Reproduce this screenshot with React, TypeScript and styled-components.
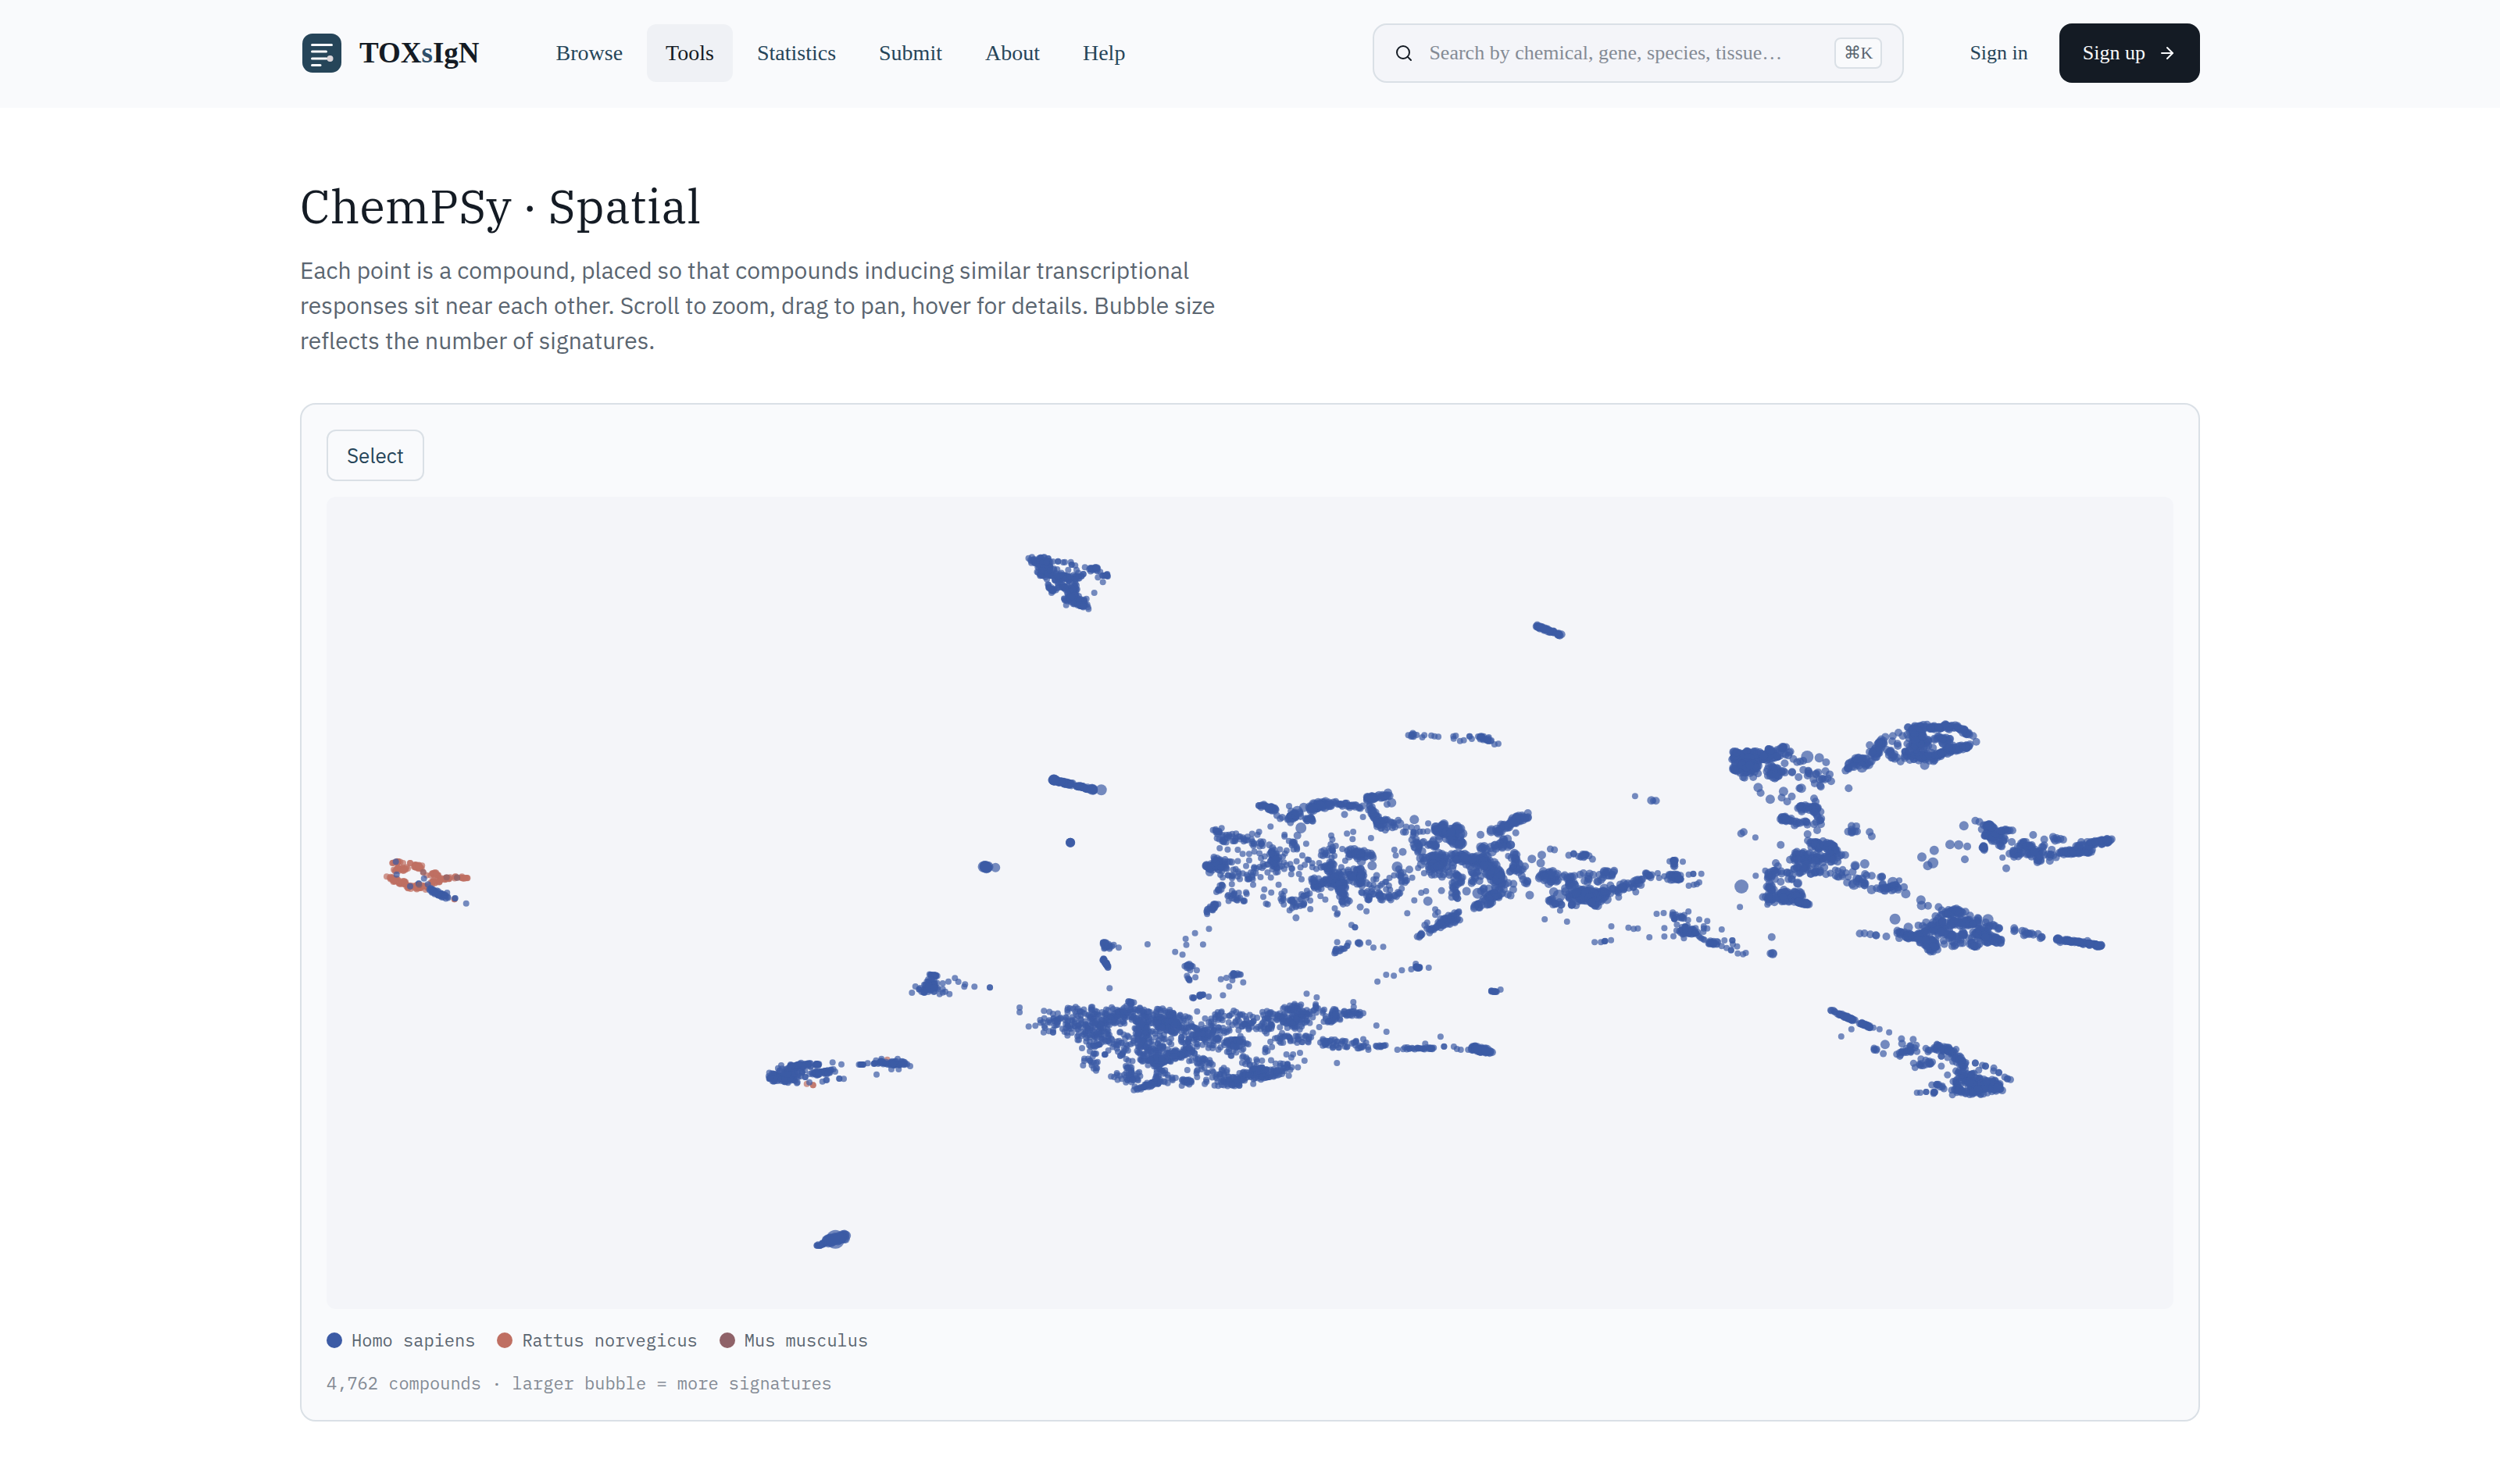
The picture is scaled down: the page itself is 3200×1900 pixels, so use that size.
import React from "react";
import styled, { createGlobalStyle } from "styled-components";
import { ArrowRight, Search } from "lucide-react";

const color = {
  ink: "#141b24",
  navy: "#264559",
  slate: "#5a6570",
  mute: "#848b95",
  line: "#dae0e6",
  surface: "#f9fafc",
  sunken: "#f4f5f9",
};

const font = {
  ui: '"Liberation Serif", "Times New Roman", serif',
  title: '"IBM Plex Serif", "Noto Serif", "DejaVu Serif", serif',
  body: '"IBM Plex Sans", "Liberation Sans", sans-serif',
  mono: '"IBM Plex Mono", "Liberation Mono", monospace',
};

const GlobalStyle = createGlobalStyle`
  *, *::before, *::after { box-sizing: border-box; }
  body { margin: 0; background: #fff; color: ${color.ink}; font-family: ${font.body}; }
`;

const Header = styled.header`
  background: ${color.surface};
`;

const Container = styled.div`
  max-width: 2560px;
  margin: 0 auto;
  padding: 0 64px;
`;

const Bar = styled(Container)`
  display: flex;
  align-items: center;
  min-height: 138px;
  padding-bottom: 2px;
  font-family: ${font.ui};
`;

const Brand = styled.a`
  display: flex;
  align-items: center;
  gap: 20px;
  margin-right: 74px;
  color: ${color.ink};
  font-size: 37px;
  font-weight: 700;
  line-height: 44px;
  text-decoration: none;
`;

const BrandAccent = styled.span`
  color: #2f4f6a;
`;

const Nav = styled.nav`
  display: flex;
  gap: 7px;
  margin-right: auto;
`;

const NavLink = styled.a<{ $active?: boolean }>`
  padding: 20px 24px;
  border-radius: 12px;
  background: ${(p) => (p.$active ? "#eff1f5" : "transparent")};
  color: ${(p) => (p.$active ? color.ink : color.navy)};
  font-size: 28px;
  line-height: 34px;
  text-decoration: none;
`;

const SearchBox = styled.label`
  display: flex;
  align-items: center;
  gap: 20px;
  flex: 0 1 680px;
  height: 76px;
  padding: 0 26px;
  border: 2px solid ${color.line};
  border-radius: 18px;
  background: ${color.sunken};
`;

const SearchInput = styled.input`
  flex: 1;
  min-width: 0;
  padding: 0;
  border: 0;
  outline: 0;
  background: transparent;
  color: ${color.ink};
  font: 26px ${font.ui};
  &::placeholder { color: ${color.mute}; opacity: 1; }
`;

const Kbd = styled.kbd`
  padding: 0 10px;
  border: 2px solid ${color.line};
  border-radius: 8px;
  background: ${color.surface};
  color: ${color.slate};
  font: 22px/36px ${font.ui};
`;

const Account = styled.div`
  display: flex;
  align-items: center;
  gap: 12px;
  margin-left: 56px;
  font-size: 26px;
  line-height: 32px;
`;

const SignIn = styled.a`
  padding: 22px 28px;
  color: ${color.navy};
  text-decoration: none;
`;

const SignUp = styled.button`
  display: flex;
  align-items: center;
  gap: 16px;
  padding: 22px 30px;
  border: 0;
  border-radius: 16px;
  background: ${color.ink};
  color: ${color.surface};
  font: inherit;
  cursor: pointer;
`;

const Page = styled(Container)`
  padding-top: 91px;
  padding-bottom: 80px;
`;

const Title = styled.h1`
  margin: 0 0 24px;
  font: 400 60px/70px ${font.title};
`;

const Lead = styled.p`
  max-width: 1200px;
  margin: 0 0 58px;
  color: ${color.slate};
  font-size: 30px;
  line-height: 45px;
`;

const Card = styled.section`
  display: flex;
  flex-direction: column;
  align-items: flex-start;
  padding: 32px;
  border: 2px solid ${color.line};
  border-radius: 20px;
  background: ${color.surface};
`;

const SelectButton = styled.button`
  padding: 16px 24px;
  border: 2px solid ${color.line};
  border-radius: 12px;
  background: ${color.surface};
  color: ${color.navy};
  font: 26px/30px ${font.body};
  cursor: pointer;
`;

const Plot = styled.svg`
  display: block;
  width: 100%;
  height: auto;
  margin: 20px 0 24px;
  border-radius: 12px;
  background: ${color.sunken};
`;

const Legend = styled.ul`
  display: flex;
  flex-wrap: wrap;
  gap: 28px;
  margin: 0 0 24px;
  padding: 0;
  list-style: none;
  color: ${color.slate};
  font: 22px/32px ${font.mono};
`;

const LegendItem = styled.li`
  display: flex;
  align-items: center;
  gap: 12px;
`;

const Swatch = styled.span<{ $color: string }>`
  width: 20px;
  height: 20px;
  border-radius: 50%;
  background: ${(p) => p.$color};
`;

const Caption = styled.p`
  margin: 0;
  color: ${color.mute};
  font: 22px/30px ${font.mono};
`;

/* ---------- embedding ---------- */

type Species = "human" | "rat" | "mouse";

const speciesColor: Record<Species, string> = {
  human: "#3c5ba5",
  rat: "#bf6f62",
  mouse: "#8f6268",
};

/**
 * A tile of the embedding. `runs` holds dense streaks, each one
 * "x1 y1 x2 y2 count spread radius"; `dots` holds single compounds,
 * each one "x y radius". Spread and radius may be left out.
 */
interface Tile {
  origin: [number, number];
  scale: [number, number];
  radius: number;
  species?: Species;
  runs: string;
  dots: string;
}

const tiles: Tile[] = [
  {
    origin: [842, 43],
    scale: [3, 3],
    radius: 4,
    runs: `182 113 252 118 38 3,210 135 255 140 30 4,210 165 265 168 34 3,235 140 260 165 20 4,265 180 340 185 50 4,355 170 370 190 8 3,
      400 152 440 148 20 2,455 173 475 172 12 1,245 213 270 235 18 2,285 210 320 215 16 3,320 220 360 220 25 4,315 255 380 278 44 4,330 230 345 270 20 4,
      360 285 395 290 18 2,260 958 330 975 50 1 5,330 975 425 997 35 1 5,264 957 270 960 3 0 7,0 1292 15 1293 8 1 7`,
    dots: `263 120,283 119,283 119,303 123,309 122,332 122,335 132,335 132,349 135,354 152,322 152,280 150,240 188,380 168,380 168,386 142,
      445 160,436 181,455 199,422 240,258 240,400 302,392 263,314 287,306 262,415 995 7,449 997 7,330 1199 6,330 1199 6,331 1199 6,330 1198 5,43 1295 6`,
  },
  {
    origin: [1548, 165],
    scale: [1, 1],
    radius: 5,
    runs: `0 0 8 4 12 1,4 2 32 12 26 1`,
    dots: ``,
  },
  {
    origin: [1082, 86],
    scale: [2.24, 3],
    radius: 4,
    runs: `678 658 695 658 8 2,885 668 915 676 22 2`,
    dots: `702 657,718 666,724 658,744 659,753 662,764 664,807 662,814 660,808 671,826 680,837 677,853 662,854 662,860 672,878 663,925 693,936 691`,
  },
  {
    origin: [1082, 86],
    scale: [2.24, 3],
    radius: 4.5,
    runs: `250 926 300 945 32 2,305 965 370 965 36 4,380 980 410 978 12 2,395 935 460 920 30 3 6,460 918 540 932 30 2,562 903 620 885 30 2 5.5,
      570 935 595 995 34 3,590 1000 640 1000 25 5,118 1023 140 1023 12 2 4,130 1040 150 1055 10 3 4,150 1055 240 1048 30 4 4,235 1070 262 1075 12 3 4,
      340 1070 355 1090 12 3 4,285 1085 298 1160 34 3,105 1165 145 1155 42 4 5.5,120 1140 165 1142 12 3,145 1185 230 1192 30 5 4,200 1140 330 1130 22 8 4,
      230 1170 360 1180 26 9 4,145 1220 130 1270 10 2 4,98 1345 130 1300 22 2 4,160 1280 205 1275 22 5 4,300 1270 330 1300 8 4 4,340 1315 390 1275 30 5 4,
      400 1130 475 1130 22 10 4,460 1075 468 1110 9 3 4,510 1110 575 1120 32 4 5,435 1150 455 1170 18 5,405 1210 412 1245 15 2,410 1230 550 1195 70 6,
      470 1190 490 1250 26 4,520 1170 545 1220 32 5 5,480 1250 500 1305 22 4,550 1250 560 1300 10 3,560 1220 625 1230 14 6 4,560 1250 600 1280 9 3,
      600 1285 655 1270 18 3,655 1180 665 1220 12 3,765 1020 825 1030 42 5 6,785 1040 830 1070 26 4 5.5,700 1075 770 1075 18 5 5,700 1080 705 1120 10 3,
      725 1130 790 1140 48 7 5.5,745 1170 770 1180 18 5 5,810 1120 840 1130 26 4 5,840 1135 900 1140 32 5 5.5,900 1130 935 1220 56 5 6,870 1170 870 1220 12 5 5,
      800 1190 830 1220 16 5 5,805 1230 815 1305 18 3,890 1270 950 1260 36 5 5,870 1318 920 1295 20 3 5,915 1020 940 1025 7 2 6,945 1015 1015 965 56 3 5,
      925 1080 965 1075 18 4 5.5,890 1100 910 1090 7 5 6,975 1130 1060 1140 11 5 5.5,960 1180 1010 1170 18 6 5,1005 1200 1020 1230 6 2 5,960 1250 985 1250 7 6 5,
      1170 1117 1190 1122 14 2,705 1435 715 1420 8 1,735 1400 825 1352 58 4,1060 1205 1100 1200 28 6 5.5,1130 1195 1145 1220 12 3 5,1160 1200 1230 1200 16 5 5,
      1240 1192 1270 1185 12 3 5,1130 1250 1180 1270 22 7 5.5,1165 1270 1240 1270 66 5 6,1200 1300 1220 1305 12 2 5.5,1240 1260 1340 1225 38 4 5,1070 1300 1110 1300 12 3 5,
      1150 1300 1155 1300 5 3 5,1355 1190 1375 1200 12 2,680 1020 740 1030 5 3 4`,
    dots: `336 930 4,340 994,370 1014 7,378 935 6,360 950 7,283 1009 4,495 962,548 972 4,617 923,630 917 6,640 1010,670 1030,695 982 6,735 997 4,693 1030 4,711 1028 4,
      720 1028 4,733 1027 4,691 1044 4,672 1011,653 998 6,664 1030,520 1029 4,502 1036 4,518 1057 4,571 1053 4,457 1043 4,460 1058 4,250 1029 4,323 1047 4,323 1040 4,
      360 1043 5,137 1092 4,160 1097 4,189 1098 4,203 1114 4,385 1075 4,329 1101 4,374 1120 4,381 1156 4,172 1230 4,233 1232 4,306 1232 4,265 1250 4,285 1262 4,262 1279 4,
      270 1305 4,275 1308 4,323 1257 4,397 1326 4,356 1359,436 1100,543 1142 6,574 1159 6,587 1197,637 1196 4,646 1164 7,638 1098 4,642 1120 4,662 1106 5,681 1174 5,
      663 1185,689 1205 4,659 1247 4,426 1276 4,440 1289 4,467 1323 4,475 1342 4,473 1346 4,558 1334 4,540 1318,675 1342 4,695 1292 4,715 1263 4,729 1257 4,734 1295 6,
      773 1255,706 1168 4,723 1188 4,845 1257 5.5,877 1265 7,885 1040 5,986 1033,964 1122 4,865 1175 8,1026 1272 5.5,1085 1095,1097 1098,1138 1119,1152 1113,1152 1114,1206 1134,
      823 1335 4,755 1327 4,763 1338 4,755 1348 4,732 1378 4,1281 1280,1330 1260,1095 1260 6,1110 1275 8,1113 1331 4,1069 1365 4,1133 1374 4,1393 1188 4,1397 1206 4,
      1412 1200 4,1240 1182 6`,
  },
  {
    origin: [1082, 86],
    scale: [2.24, 3],
    radius: 4,
    runs: `1425 1202 1457 1205 30 3 4.5,1440 1135 1440 1170 12 1 4.5,1435 1355 1470 1358 18 2,1450 1405 1500 1410 40 4,1500 1415 1525 1442 10 1,465 1490 505 1465 14 2`,
    dots: `1482 1193,1495 1190,1495 1191,1518 1190,1482 1236,1496 1232,1512 1223,1505 1230,1427 1142,1465 1144,1328 892,1375 908 5.5,1380 910,1388 910 5,
      1390 1344,1410 1341,1436 1339,1481 1335,1480 1368,1512 1366,1535 1372,1525 1392,1535 1400,1525 1400,1448 1385,1412 1399,1412 1431,1369 1434,1438 1430,1468 1438,
      1524 1413,1260 1392,1309 1397,1324 1402,1336 1400,1212 1453,1230 1453,1242 1448,1240 1450,1242 1449,1259 1445,515 1387,525 1396,525 1396,474 1453,506 1456,
      536 1456 5,538 1458 5,533 1455,564 1454,578 1474,606 1471`,
  },
  {
    origin: [842, 543],
    scale: [2.24, 3],
    radius: 4,
    runs: `338 92 358 100 22 3,340 145 355 178 28 1,578 172 595 175 12 2,580 208 588 228 5 1,710 208 732 205 14 2,595 293 600 300 4 1,610 288 630 286 10 1,
      1235 178 1250 182 14 1,1452 270 1466 272 12 1,185 365 215 360 8 5,165 400 240 385 24 6,240 370 330 400 66 10,240 430 310 440 24 6,330 380 400 370 60 6,
      310 350 400 350 16 4,310 410 360 470 52 8,415 315 430 315 10 2,395 340 440 355 16 4,440 365 540 380 100 8,440 390 460 440 42 6,500 400 560 410 66 6,
      430 440 520 450 32 10,435 470 540 480 38 7,370 430 420 500 26 10,450 500 490 540 42 8,485 542 595 495 100 4,550 390 620 430 32 8,600 430 660 440 44 5,
      570 430 580 480 16 4,620 440 740 470 46 12,650 380 740 400 46 9,700 465 745 475 32 4,740 380 800 400 24 8,790 360 830 350 14 5,790 400 820 400 18 4,
      860 335 900 330 20 3,850 380 910 390 70 7,890 350 970 350 36 6,985 380 1010 370 28 4,1000 350 1080 358 34 3,860 430 880 450 6 2,840 455 940 455 28 3,
      965 470 1090 472 52 4,1120 480 1150 482 10 1,1200 490 1290 490 30 1,1400 488 1455 504 56 2 5,300 500 330 495 12 6,290 540 320 560 12 4,
      395 610 450 590 30 5,430 645 500 620 44 2,405 530 415 575 10 3,490 570 515 610 24 6,525 600 545 610 5 2,570 610 590 620 16 2,600 530 650 560 20 6,
      620 560 690 610 34 9,670 620 740 622 32 3,720 600 850 580 100 4,760 560 800 575 28 4,740 530 800 545 9 4,840 550 890 565 16 5,680 500 830 490 16 10,270 345 320 345 8 3`,
    dots: `16 256,101 333,101 351,127 406,359 259,371 92,385 103,468 90,644 31,604 47,577 69,579 92,627 91,547 119,568 130,590 190,609 190,605 217,678 224,694 219,
      711 228,742 236,702 252,684 286,643 291,1127 233,1152 207,1174 211,1197 190,1224 186,1237 165,1274 180,1480 264,171 346,170 428,197 428,197 428,
      950 320,950 326,924 280,953 294,1058 312,1059 331,960 408,942 430,1124 402,1153 426,1308 445,715 345,722 350,610 348,1100 485,1101 495,1184 495,1264 472,
      1318 482,1318 483,1346 483,1355 492,1366 495,1387 495,280 489,345 513,345 514,347 513,390 518,390 518,283 555,323 566,320 565,380 585,380 592,372 600,363 598,
      566 633,582 573,610 600,873 595,866 513,885 513,880 525,905 507,918 537,1011 546,632 626,660 632,771 626,793 610,812 500,511 337`,
  },
  {
    origin: [1732, 53],
    scale: [2.529, 3],
    radius: 5,
    runs: `172 840 270 842 90 5 5,185 882 255 880 76 5 5,285 830 350 820 50 5 5,280 895 320 910 30 6 5,415 900 480 925 16 5,390 1038 450 1035 32 3,445 1050 455 1095 11 3,
      328 1075 362 1085 26 2,370 1095 430 1100 12 3,545 1117 575 1120 9 3,428 1175 500 1190 52 3,475 1170 510 1220 30 4,370 1228 500 1230 66 5,380 1265 465 1270 32 5,
      285 1295 365 1295 24 4,285 1330 300 1350 13 2,282 1385 395 1380 56 4,330 1370 390 1365 22 3,380 1400 420 1405 24 1,485 1275 545 1295 12 4 4.5,555 1325 600 1320 14 4,
      655 1342 705 1345 24 3,530 905 550 880 5 1,550 865 610 855 26 4 5.5,610 840 635 840 8 4,632 828 658 770 36 3,665 810 700 845 14 3,728 835 830 840 54 4,
      830 835 945 792 54 2,740 795 800 775 40 6,750 735 800 730 28 4,750 740 780 780 24 5,800 728 900 725 40 2,900 725 935 755 20 2,845 765 885 805 28 5,
      990 1105 1008 1105 20 2,995 1120 1040 1165 56 5,982 1182 985 1200 11 1,1040 1122 1075 1122 9 1,1100 1180 1135 1180 17 3,1075 1210 1100 1215 18 3,
      1130 1200 1170 1230 38 5,1180 1190 1210 1230 11 4,1205 1150 1240 1160 7 2,1230 1208 1330 1200 60 2,1280 1185 1310 1180 8 1,1322 1175 1398 1160 52 2,
      700 1500 715 1530 8 3,725 1523 780 1535 32 3,780 1490 850 1500 30 5,785 1530 830 1578 66 5,840 1470 855 1490 13 3,850 1435 910 1435 38 3,880 1480 970 1472 54 3,
      850 1520 905 1565 32 6,915 1520 920 1530 8 2,940 1525 1035 1550 50 4,935 1555 965 1565 14 2,970 1510 1000 1530 26 3,985 1485 1045 1492 12 3,
      1110 1515 1135 1520 8 2,1218 1540 1255 1545 14 1,1255 1545 1372 1568 62 1`,
    dots: `205 918,210 920,238 918,340 865,330 895,336 895,364 898,364 900,368 848,380 860,385 918,400 855,390 858,413 840 8,452 844 6,474 861,472 895,400 890,437 942,
      457 955,455 950,254 958 6,262 979,293 1003 6,336 973 6,330 997,348 1012,363 992,388 961,394 961 6,547 961,435 1000,440 1012,388 1033,395 1050,445 1122,414 1137,
      415 1162,207 1129,199 1135,245 1150 4,327 1178,615 1129,622 1145,536 1217,311 1248,318 1260,277 1277 4,246 1297 4,382 1325 6,382 1327,200 1338 9,284 1408 4,
      195 1417 4,327 1320,337 1350,568 1258 6,568 1260,560 1282,599 1251 6,564 1330 7,600 1290,605 1295,622 1297,650 1302,655 1300,655 1302,711 1315 4,621 1350 6,638 1345,
      690 1322 7,726 1340,732 1366 6,781 1390 6,783 1411 6,804 1412,838 1417,590 880 7,615 795,690 760,708 747,722 760,688 780,705 790,706 798,715 858,745 852,793 872 6,
      950 760,960 782,824 770,825 775,805 798,790 805,820 805,860 715,920 1105 6,957 1085,970 1090,978 1118,1075 1167,875 1177 6,903 1178 6,931 1184,923 1234,
      824 1199 6,784 1225 6,820 1247 7,803 1258 6,1045 1227 4,1057 1268,1144 1140,1180 1157,1180 1180,1300 1167,697 1463 7,583 1519,598 1518,617 1522,635 1525,636 1526,
      669 1530,740 1495 6,828 1452,925 1435,940 1450,998 1465 7,1083 1498,1083 1510,1085 1505,1145 1523,1160 1520,1172 1532,1172 1532,1168 1537,1232 1552,1320 1547,
      298 1532,294 1595,301 1596 6,302 1595`,
  },
  {
    origin: [1732, 53],
    scale: [2.529, 3],
    radius: 4.5,
    runs: `490 1810 500 1820 5 1,510 1825 565 1852 42 1,580 1860 620 1880 26 1,625 1962 645 1965 5 1,705 1978 750 1960 22 3,775 2022 815 2010 15 3,818 1952 888 1972 42 3,
      895 1995 930 2030 26 3,893 2080 900 2130 18 3,905 2045 955 2090 54 6,935 2100 1040 2105 90 5 5,905 2130 990 2125 36 3,830 2098 860 2112 9 1,818 2128 826 2130 5 1,
      85 1555 125 1555 20 2 4,795 1970 805 1960 4 2`,
    dots: `627 1880 4,647 1886 4,678 1898 4,556 1886 4,523 1914 4,718 1923,756 1925,720 1942 5,766 1948,665 1945 6,659 1980,768 1972,781 2000,757 2017,762 2033,847 1990,
      847 1990,847 2028,867 2062,867 1995,884 2010,883 2138,880 2120,957 2016,957 2016,980 2025,990 2028,990 2028,1017 2035,1016 2046,1033 2053,1033 2053,968 2044,
      1052 2070,1062 2076,1060 2077,1071 2080,768 2130 4,779 2130 4,798 2127 4,798 2127 4,816 2100,145 1545 4,170 1545 4,171 1545 4,172 1560 4,186 1568 4,136 1567 4,
      136 1503 4,152 1574 4,166 1583 4,167 1582 4,188 1595 4,205 1598 4,214 1593 4`,
  },
  {
    origin: [542, 563],
    scale: [3, 3],
    radius: 4,
    species: "rat",
    runs: ``,
    dots: `242 571,242 571,218 566,527 473`,
  },
  {
    origin: [542, 563],
    scale: [3, 3],
    radius: 4,
    runs: `690 148 720 150 16 1,680 172 715 172 9 2,660 203 725 195 54 4,76 540 175 545 100 4,120 518 205 520 36 4,150 497 235 492 46 2,250 490 265 492 14 1,
      235 528 320 518 42 2,418 492 435 492 7 0,475 483 600 488 60 2,258 1187 310 1170 30 1,300 1170 365 1152 46 2 6`,
    dots: `622 216,635 192,740 180,762 173,787 160,800 174,826 184,823 193,862 193,921 196,740 202,750 212,766 221,728 221,740 215,120 495,317 484,351 491,212 540,
      212 540,228 560,180 563,278 557,292 552,295 551,343 546,343 546,360 547,452 487,505 470,567 470,543 510,571 510,486 530,615 498,328 1163 12`,
  },
  {
    origin: [22, 423],
    scale: [3, 3],
    radius: 4,
    species: "rat",
    runs: `185 135 215 135 12 1,190 165 245 160 22 2,172 195 240 220 48 2,245 228 320 232 30 2,270 150 300 155 24 2,325 175 370 185 14 2,335 215 375 200 14 2,
      370 200 430 192 20 1,450 193 482 193 11 1`,
    dots: `228 138,255 138,255 138,305 173,318 185,425 277,425 277`,
  },
  {
    origin: [22, 423],
    scale: [3, 3],
    radius: 4,
    runs: `330 242 398 268 46 2`,
    dots: `200 133,203 182,308 197,288 216,288 218,255 227,323 220,397 252,427 274,428 273,470 293`,
  },
  {
    origin: [22, 423],
    scale: [3, 3],
    radius: 4,
    species: "mouse",
    runs: ``,
    dots: `395 193,435 193,436 195,290 222,305 173`,
  },
];

interface Point {
  x: number;
  y: number;
  r: number;
  species: Species;
}

function buildPoints(): Point[] {
  let seed = 4762;
  const random = () => {
    seed = (seed * 1664525 + 1013904223) % 4294967296;
    return seed / 4294967296;
  };
  const parse = (list: string) =>
    list
      .split(",")
      .map((entry) => entry.trim())
      .filter(Boolean)
      .map((entry) => entry.split(/\s+/).map(Number));
  const points: Point[] = [];
  for (const tile of tiles) {
    const species = tile.species ?? "human";
    const add = (x: number, y: number, r: number, spread = 0) => {
      const angle = random() * Math.PI * 2;
      const reach = Math.sqrt(random()) * spread * 1.6;
      points.push({
        x: tile.origin[0] + x / tile.scale[0] + Math.cos(angle) * reach,
        y: tile.origin[1] + y / tile.scale[1] + Math.sin(angle) * reach,
        r,
        species,
      });
    };
    for (const [x1, y1, x2, y2, count, spread = 0, r = tile.radius] of parse(tile.runs)) {
      for (let i = 0; i < count; i++) {
        const t = random();
        add(x1 + (x2 - x1) * t, y1 + (y2 - y1) * t, r, spread);
      }
    }
    for (const [x, y, r = tile.radius] of parse(tile.dots)) add(x, y, r);
  }
  return points;
}

const points = buildPoints();

function SpatialPlot() {
  return (
    <Plot viewBox="0 0 2364 1040" role="img" aria-label="Compound map">
      {points.map((p, i) => (
        <circle
          key={i}
          cx={p.x.toFixed(1)}
          cy={p.y.toFixed(1)}
          r={p.r}
          fill={speciesColor[p.species]}
          fillOpacity={0.7}
        />
      ))}
    </Plot>
  );
}

function Logo() {
  return (
    <svg width="56" height="56" viewBox="0 0 56 56" aria-hidden="true">
      <rect x="3" y="3" width="50" height="50" rx="13" fill={color.navy} />
      <g stroke={color.surface} strokeWidth="3" strokeLinecap="round">
        <path d="M15.5 17.5H40.5" />
        <path d="M15.5 26H33.5" />
        <path d="M15.5 35H34" />
        <path d="M15.5 43.5H26" />
      </g>
      <circle cx="38.5" cy="35" r="4" fill="#dcd6da" />
    </svg>
  );
}

const navItems = ["Browse", "Tools", "Statistics", "Submit", "About", "Help"];

const legend: { label: string; species: Species }[] = [
  { label: "Homo sapiens", species: "human" },
  { label: "Rattus norvegicus", species: "rat" },
  { label: "Mus musculus", species: "mouse" },
];

export default function App() {
  return (
    <>
      <GlobalStyle />
      <Header>
        <Bar>
          <Brand href="#">
            <Logo />
            <span>
              TOX<BrandAccent>s</BrandAccent>IgN
            </span>
          </Brand>
          <Nav aria-label="Main">
            {navItems.map((item) => (
              <NavLink key={item} href="#" $active={item === "Tools"}>
                {item}
              </NavLink>
            ))}
          </Nav>
          <SearchBox>
            <Search size={24} aria-hidden="true" />
            <SearchInput
              type="search"
              aria-label="Search"
              placeholder="Search by chemical, gene, species, tissue…"
            />
            <Kbd>⌘K</Kbd>
          </SearchBox>
          <Account>
            <SignIn href="#">Sign in</SignIn>
            <SignUp type="button">
              Sign up
              <ArrowRight size={24} aria-hidden="true" />
            </SignUp>
          </Account>
        </Bar>
      </Header>
      <Page as="main">
        <Title>ChemPSy · Spatial</Title>
        <Lead>
          Each point is a compound, placed so that compounds inducing similar transcriptional
          responses sit near each other. Scroll to zoom, drag to pan, hover for details. Bubble size
          reflects the number of signatures.
        </Lead>
        <Card>
          <SelectButton type="button">Select</SelectButton>
          <SpatialPlot />
          <Legend>
            {legend.map((item) => (
              <LegendItem key={item.label}>
                <Swatch $color={speciesColor[item.species]} />
                {item.label}
              </LegendItem>
            ))}
          </Legend>
          <Caption>4,762 compounds · larger bubble = more signatures</Caption>
        </Card>
      </Page>
    </>
  );
}
